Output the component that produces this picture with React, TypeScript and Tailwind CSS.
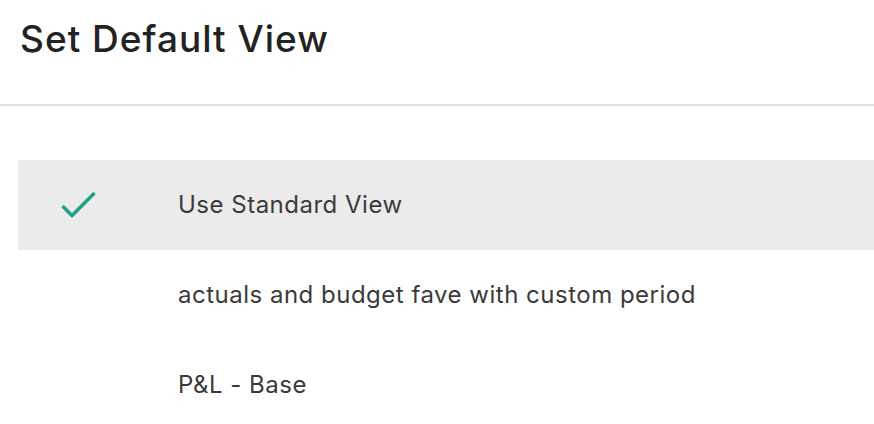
import React from "react";

const rows = [
  { label: "Use Standard View", selected: true },
  { label: "actuals and budget fave with custom period", selected: false },
  { label: "P&L - Base", selected: false },
];

export default function App() {
  return (
    <div
      className="w-[874px] h-[424px] overflow-hidden bg-white"
      style={{ fontFamily: 'Inter, "Liberation Sans", Arial, sans-serif' }}
    >
      <div className="h-[106px] px-5 pt-[17px] border-b-2 border-[#e0e0e0]">
        <h1 className="text-[37px] leading-[44px] font-medium tracking-[1px] text-[#222222]">
          Set Default View
        </h1>
      </div>
      <div className="pt-[54px] pl-[18px]">
        {rows.map((r) => (
          <div
            key={r.label}
            className={`h-[90px] flex items-center ${r.selected ? "bg-[#ebebeb]" : ""}`}
          >
            <div className="w-[160px] shrink-0 pl-[43px] flex items-center">
              {r.selected && (
                <svg width="36" height="28" viewBox="0 0 36 28" fill="none">
                  <path
                    d="M1.5 15 L11 24.5 L33.5 2"
                    stroke="#1fa383"
                    strokeWidth="3.4"
                    strokeLinecap="butt"
                    strokeLinejoin="miter"
                  />
                </svg>
              )}
            </div>
            <span className="text-[24px] leading-[30px] tracking-[0.5px] text-[#3a3a3a]">
              {r.label}
            </span>
          </div>
        ))}
      </div>
    </div>
  );
}
